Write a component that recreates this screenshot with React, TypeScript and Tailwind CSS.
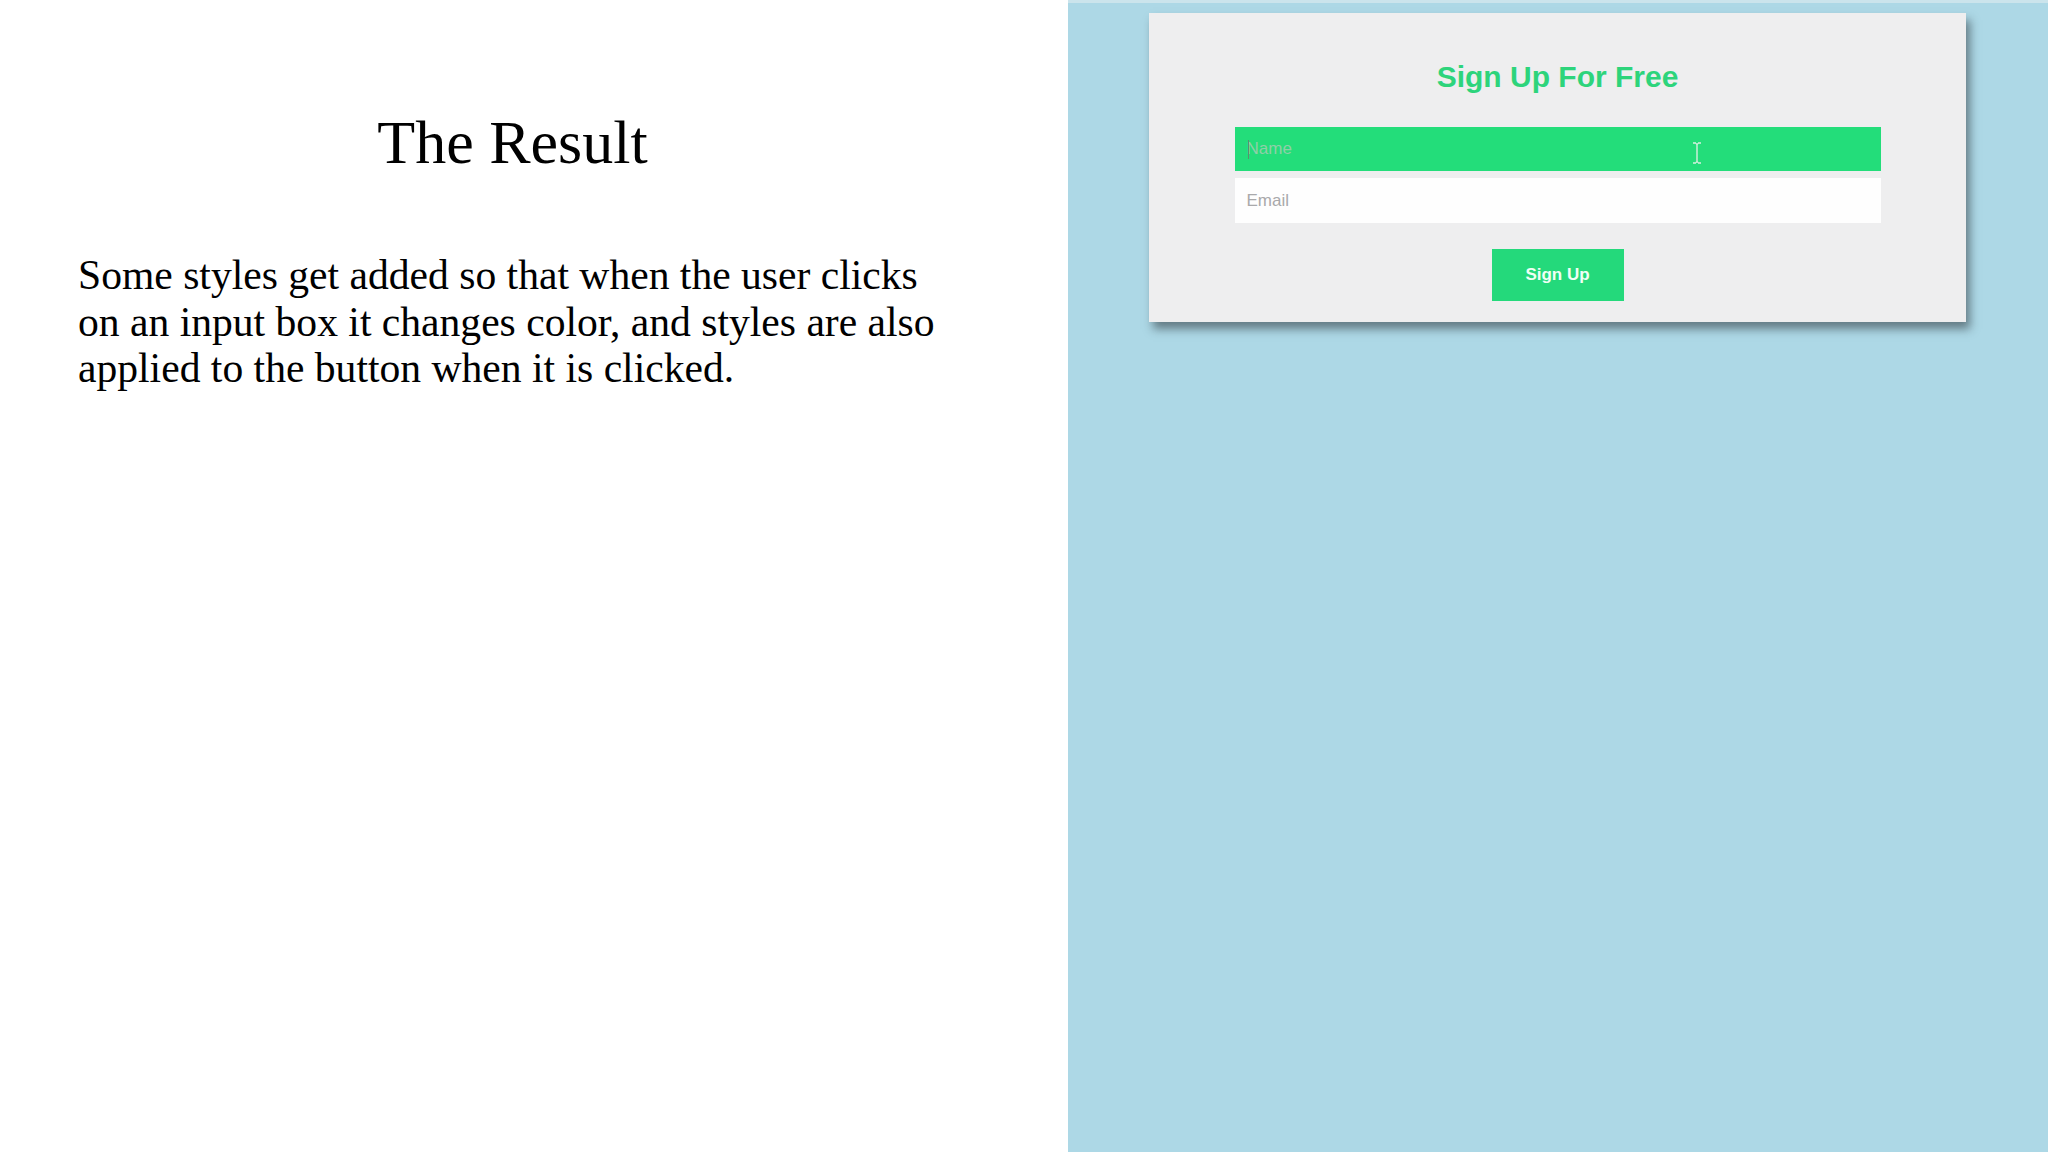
import React from "react";

export default function App() {
  return (
    <div className="flex h-[1152px] w-[2048px] overflow-hidden bg-white">
      {/* Left slide text */}
      <div className="w-[1068px] shrink-0 pl-[78px] pt-[107px]">
        <div className="w-[880px] font-['Liberation_Serif',serif] text-black">
          <h1 className="w-[869px] text-center text-[62px] leading-[71px] font-normal">The Result</h1>
          <p className="mt-[74px] whitespace-nowrap text-[41.6px] leading-[46.5px]">
            Some styles get added so that when the user clicks
            <br />
            on an input box it changes color, and styles are also
            <br />
            applied to the button when it is clicked.
          </p>
        </div>
      </div>

      {/* Right demo panel */}
      <div className="flex flex-1 flex-col bg-[#add8e6]">
        <div className="h-[3px] bg-[#cbe4ec]" />
        <div className="ml-[81px] mt-[10px] flex h-[309px] w-[817px] flex-col items-center bg-[#eeeeef] pt-[47px] shadow-[4px_7px_9px_rgba(40,50,55,0.55)] font-['Liberation_Sans',Arial,sans-serif]">
          <h2 className="text-[30px] leading-[33px] font-bold text-[#2dd47b]">Sign Up For Free</h2>

          <div className="relative mt-[34px] h-[44px] w-[646px]">
            <input
              readOnly
              placeholder="Name"
              className="h-full w-full bg-[#23dd7a] pl-[12px] text-[17px] outline-none placeholder:text-[#8fcfa8]"
            />
            <span className="absolute left-[13px] top-[13px] h-[19px] w-[1px] bg-[#5a8f6f]" />
            <svg
              className="absolute left-[457px] top-[15px]"
              width="10"
              height="22"
              viewBox="0 0 10 22"
              fill="none"
              stroke="#d6efdf"
              strokeWidth="1.4"
            >
              <path d="M1 1h3M6 1h3M5 2v18M1 21h3M6 21h3M4 1.5l1 0.8l1 -0.8M4 20.5l1 -0.8l1 0.8" />
            </svg>
          </div>

          <input
            readOnly
            placeholder="Email"
            className="mt-[7px] h-[45px] w-[646px] bg-[#fefefe] pl-[12px] text-[17px] outline-none placeholder:text-[#a9a9ab]"
          />

          <button className="mt-[26px] h-[52px] w-[132px] bg-[#24d97b] text-[17px] font-bold text-[#f0fff5]">
            Sign Up
          </button>
        </div>
      </div>
    </div>
  );
}
